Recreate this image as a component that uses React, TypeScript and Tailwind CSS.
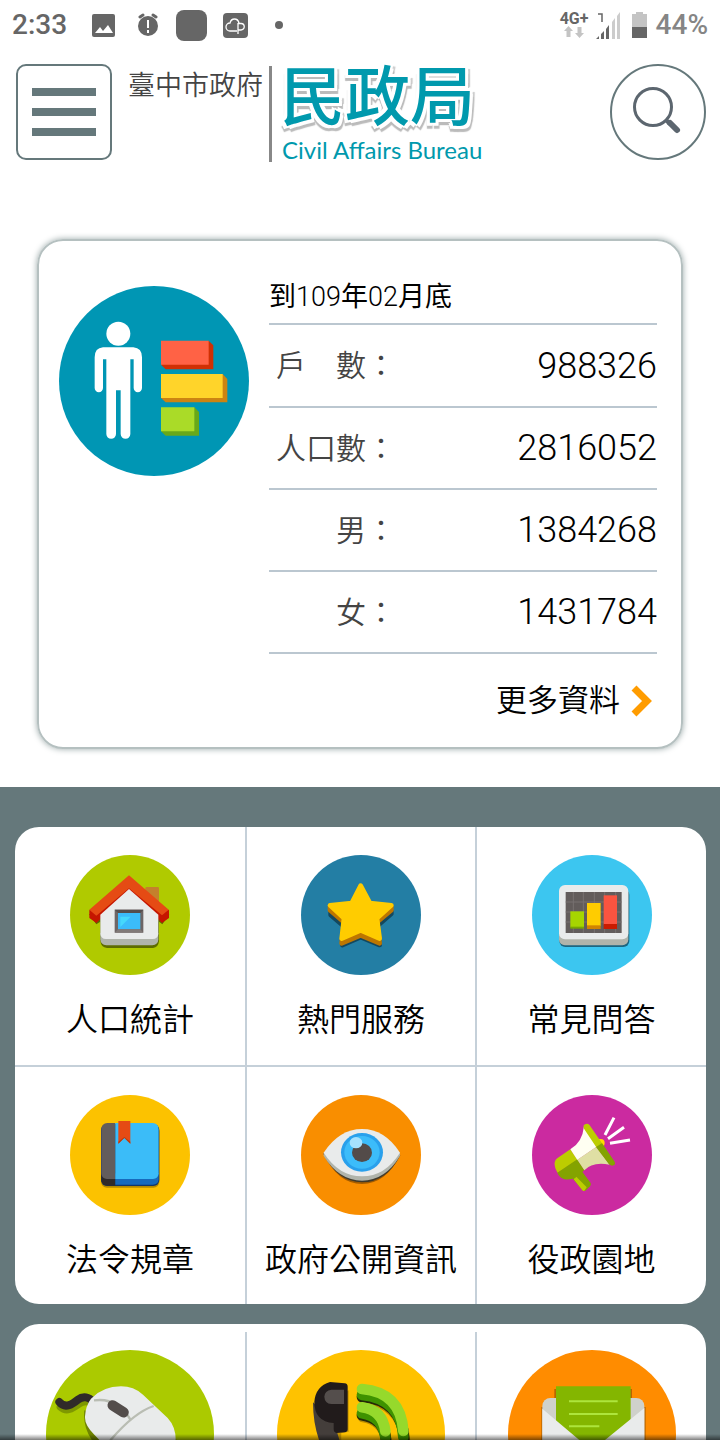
import React from 'react';
import clsx from 'clsx';

interface Service {
  label: string;
  icon: React.ReactNode;
}

const stats = [
  { label: '戶　數：', value: '988326' },
  { label: '人口數：', value: '2816052' },
  { label: '男：', value: '1384268' },
  { label: '女：', value: '1431784' },
];

const PopulationIcon = () => (
  <svg viewBox="0 0 570 570" className="w-[190px] h-[190px] shrink-0" aria-hidden="true">
    <circle cx="285" cy="285" r="285" fill="#0096b4" />
    <g fill="#fff">
      <circle cx="178" cy="143" r="36" />
      <path d="M132 184h91q26 2 26 30v92a12 12 0 0 1-25 0v-86h-10v224a14 14 0 0 1-29 0V313h-14v131a14 14 0 0 1-29 0V220h-10v86a12 12 0 0 1-25 0v-92q0-28 25-30z" />
    </g>
    <path fill="#d03004" d="M306 236l14 14h143v-72l-14-14z" />
    <path fill="#ff6245" d="M306 164h143v72H306z" />
    <path fill="#cc8412" d="M306 336l14 13h185v-70l-14-15z" />
    <path fill="#ffd42a" d="M306 264h185v72H306z" />
    <path fill="#68a81a" d="M306 436l14 13h100v-71l-14-14z" />
    <path fill="#aadb28" d="M306 364h100v72H306z" />
  </svg>
);

const HouseIcon = () => (
  <svg viewBox="208 105 360 360" className="w-[120px] h-[120px]" aria-hidden="true">
    <circle cx="388" cy="285" r="180" fill="#b0ca00" />
    <path fill="#c4802c" d="M434 205q0-4 4-4h33q4 0 4 4v50h-41z" />
    <path fill="#5e6c00" d="M265 282l22 31 12-8v58q2 19 20 21h138q16-2 18-20v-59l10 8 21-30z" />
    <path fill="#b0b4ab" d="M299 340h174v18q-1 17-18 18H317q-17-1-18-18z" />
    <path fill="#c51500" d="M266 271v23l21 15 98-98 99 98 21-15v-23l-120-85z" />
    <path fill="#e9ebeb" d="M299 284l86-77 88 77v57q-1 15-17 16H316q-16-1-17-16z" />
    <path fill="#e54b14" d="M266 269L385 166l119 103-20 17-99-81-98 82z" />
    <path fill="#6d6565" d="M342 269h86v69h-86z" />
    <path fill="#554e4e" d="M342 269h86l-9 10h-67z" />
    <path fill="#3bbcfa" d="M352 279h67v49h-67z" />
    <path fill="#45d8fc" d="M359 290h31l-31 31z" />
    <path fill="#817a78" d="M342 338l10-10h67l9 10z" />
  </svg>
);

const StarIcon = () => (
  <svg viewBox="183 105 360 360" className="w-[120px] h-[120px]" aria-hidden="true">
    <circle cx="363" cy="285" r="180" fill="#237ea4" />
    <g strokeLinejoin="round" strokeWidth="14">
      <path fill="#14485e" stroke="#14485e" d="M362 218l28 52 64 5v6l-43 38 8 56-57-24-55 24 7-54-42-36v-10l65-5z" />
      <path fill="#bd7600" stroke="#bd7600" d="M362 208l28 52 64-1v12l-43 36 8 63-57-24-57 24 7-63-42-36v-12l65 1z" />
      <path fill="#ffcc00" stroke="#ffcc00" d="M362 197l28 52 64 7-43 39 8 61-57-25-57 25 7-61-42-39 65-7z" />
    </g>
  </svg>
);

const ChartIcon = () => (
  <svg viewBox="184 105 360 360" className="w-[120px] h-[120px]" aria-hidden="true">
    <circle cx="364" cy="285" r="180" fill="#3cc6f0" />
    <rect x="266" y="206" width="210" height="175" rx="18" fill="#1d6680" />
    <rect x="265" y="200" width="208" height="176" rx="18" fill="#b0b4ab" />
    <rect x="265" y="195" width="208" height="163" rx="18" fill="#e9ebeb" />
    <path fill="#625c5b" d="M285 216h168v123H285z" />
    <path stroke="#777170" strokeWidth="3" d="M308 216v123M338 216v123M371 216v123M402 216v123M435 216v123M285 246h168M285 276h168M285 306h168" />
    <path fill="#a6d600" d="M299 274h41v48h-41z" />
    <path fill="#78a800" d="M299 320h41v6h-41z" />
    <path fill="#ffcc00" d="M349 249h41v69h-41z" />
    <path fill="#d18300" d="M349 316h41v11h-41z" />
    <path fill="#fa5440" d="M399 226h40v88h-40z" />
    <path fill="#c91b00" d="M399 312h40v15h-40z" />
  </svg>
);

const BookIcon = () => (
  <svg viewBox="208 105 360 360" className="w-[120px] h-[120px]" aria-hidden="true">
    <circle cx="388" cy="285" r="180" fill="#fcc200" />
    <rect x="301" y="197" width="175" height="186" rx="18" fill="#b58b00" />
    <rect x="301" y="192" width="175" height="186" rx="18" fill="#11376a" />
    <path fill="#302b29" d="M302 340h42v37h-24q-17-1-18-18z" />
    <path fill="#176abc" d="M344 340h130v18q-1 16-18 16H344z" />
    <path fill="#635d5c" d="M320 189h24v168h-25q-15-1-17-15V207q1-17 18-18z" />
    <path fill="#3bbcf8" d="M344 189h112q17 1 18 18v134q-2 14-17 16H344z" />
    <path fill="#e54b14" d="M353 183h36v68l-18-18-18 18z" />
    <path fill="#b93b10" d="M353 245l18-14 18 14v6l-18-17-18 17z" />
  </svg>
);

const EyeIcon = () => (
  <svg viewBox="183 105 360 360" className="w-[120px] h-[120px]" aria-hidden="true">
    <circle cx="363" cy="285" r="180" fill="#f98e00" />
    <path fill="#a35c00" d="M250 282q45 90 116 90t115-86z" />
    <path fill="#3f3a2c" d="M250 280q42 87 116 87t115-82z" />
    <path fill="#b0b4ab" d="M251 278v10q46 74 115 74t114-74v-10z" />
    <path fill="#e9ebeb" d="M251 278q47-71 115-71t114 71q-45 71-114 71t-115-71z" />
    <ellipse cx="366" cy="277" rx="63" ry="58" fill="#29a0ec" />
    <ellipse cx="366" cy="277" rx="53" ry="49" fill="#3cbcfa" />
    <ellipse cx="366" cy="278" rx="30" ry="28" fill="#534b49" />
    <ellipse cx="348" cy="248" rx="19" ry="17" fill="#a6e2ff" />
  </svg>
);

const MegaphoneIcon = () => (
  <svg viewBox="184 105 360 360" className="w-[120px] h-[120px]" aria-hidden="true">
    <circle cx="364" cy="285" r="180" fill="#cb2aa0" />
    <circle cx="390" cy="249" r="12" fill="#ffdc00" />
    <path fill="#84a300" d="M305 355l28-22 27 36q2 5-2 10l-12 12q-5 4-10 0z" />
    <path fill="#bccd00" d="M309 358l8-8 31 32-7 10q-3 2-6-1z" />
    <path fill="#bccd00" d="M299 268l22 31-60 40q-20-34 3-47z" />
    <path fill="#84a300" d="M320 298l21 32q-32 36-62 27-14-6-19-19z" />
    <path fill="#fffff2" d="M299 268q36-20 41-69l38 61-58 40z" />
    <path fill="#dfdfa4" d="M377 260l40 54q-52-10-76 17l-21-32z" />
    <path fill="#bccd00" d="M340 206q-4-10 3-13 8-4 14 3l37 54-17 12z" />
    <path fill="#84a300" d="M376 261l18-12 38 56q3 8-3 11-7 3-14-3z" />
    <path stroke="#fff" strokeWidth="9" d="M403 225l27-52M412 236l48-34M418 250l60-10" />
  </svg>
);

const MouseIcon = () => (
  <svg viewBox="137 119 504 504" className="w-[168px] h-[168px]" aria-hidden="true">
    <circle cx="389" cy="371" r="252" fill="#abca00" />
    <path fill="none" stroke="#7f9800" strokeWidth="22" strokeLinecap="round" d="M180 290c20 18 40 2 56-9s32-8 42 4" />
    <path fill="none" stroke="#302a29" strokeWidth="24" strokeLinecap="round" d="M177 275c18 22 40 6 56-7s34-7 43 4" />
    <path fill="#708400" d="M252 300q-6 60 36 106l80 80h140l20-100z" />
    <path fill="#e9ebeb" d="M272 265q36-37 90-37 38 0 66 25l74 70q26 28 24 72-4 90-94 90-40 0-66-24l-84-88q-30-30-28-55 2-32 18-53z" />
    <path fill="none" stroke="#b9bdb3" strokeWidth="7" d="M281 270q44-5 62 14M380 312l9 14M330 390q72-84 130-103" />
    <path stroke="#534d4b" strokeWidth="31" strokeLinecap="round" d="M337 285l33 21" />
  </svg>
);

const PhoneIcon = () => (
  <svg viewBox="831 119 504 504" className="w-[168px] h-[168px]" aria-hidden="true">
    <circle cx="1083" cy="371" r="252" fill="#ffc200" />
    <path fill="#c69400" d="M944 300q2 120 86 190h30q-40-60-36-122l22-4V240z" />
    <path fill="#443e3b" d="M939 276q0 120 70 206l60-24q-56-46-62-120z" />
    <path fill="#211b1b" d="M990 215l44 4q9 1 9 10v128q0 8-9 9l-24 2q-9-2-9-12v-18q-58-4-58-64 4-46 47-59z" />
    <path fill="#544e4c" d="M1032 238v43h-38q-20-2-21-22 1-18 21-21z" />
    <g fill="none" strokeWidth="32" strokeLinecap="round">
      <path stroke="#bb8d00" d="M1089 264q118 14 126 128M1089 320q63 10 70 72" />
      <path stroke="#242a08" d="M1086 260q120 10 127 128M1086 315q66 10 72 72" />
      <path stroke="#3e9200" d="M1086 254q118 12 124 126M1086 309q62 10 70 72" />
      <path stroke="#96d92c" d="M1086 236q116 10 124 126M1086 291q62 8 70 72" />
    </g>
  </svg>
);

const MailIcon = () => (
  <svg viewBox="142 119 504 504" className="w-[168px] h-[168px]" aria-hidden="true">
    <circle cx="394" cy="371" r="252" fill="#ff8c00" />
    <path fill="#b76500" d="M281 236h233v50h-233zM242 290h313v210H242z" />
    <rect x="245" y="263" width="306" height="230" rx="24" fill="#cfd1cb" />
    <path fill="#84b600" d="M286 228h224v200H286z" />
    <path stroke="#ade53c" strokeWidth="6" d="M325 273h146M325 311h146M325 348h91" />
    <path fill="#e9ebeb" d="M245 295l110 93 39 24 40-24 117-95v180q-2 20-22 20H267q-20-2-22-20z" />
  </svg>
);

const services: Service[] = [
  { label: '人口統計', icon: <HouseIcon /> },
  { label: '熱門服務', icon: <StarIcon /> },
  { label: '常見問答', icon: <ChartIcon /> },
  { label: '法令規章', icon: <BookIcon /> },
  { label: '政府公開資訊', icon: <EyeIcon /> },
  { label: '役政園地', icon: <MegaphoneIcon /> },
];

const contacts: Service[] = [
  { label: '線上申辦', icon: <MouseIcon /> },
  { label: '聯絡電話', icon: <PhoneIcon /> },
  { label: '民政信箱', icon: <MailIcon /> },
];

const StatusBar: React.FC = () => (
  <div className="h-12 px-3 pt-[2px] flex items-center justify-between text-[28px] font-medium text-[#666]">
    <div className="flex items-center">
      <span className="w-20">2:33</span>
      <svg viewBox="0 0 23 23" className="w-[23px] h-[23px]" aria-hidden="true">
        <rect width="23" height="23" rx="2" fill="#666" />
        <path fill="#fff" d="M3 19l5-6 3 4 5-6 5 8z" />
      </svg>
      <svg viewBox="0 0 22 24" className="w-[22px] h-6 ml-[22px]" aria-hidden="true">
        <circle cx="11" cy="13" r="10" fill="#666" />
        <path stroke="#666" strokeWidth="3" strokeLinecap="round" d="M3 4l3-2M19 4l-3-2" />
        <path stroke="#fff" strokeWidth="2" d="M11 7v8M11 17v3" />
      </svg>
      <span className="w-[31px] h-[31px] ml-[17px] rounded-lg bg-[#666]" />
      <svg viewBox="0 0 25 25" className="w-[25px] h-[25px] ml-4" aria-hidden="true">
        <rect width="25" height="25" rx="4" fill="#666" />
        <path fill="none" stroke="#fff" strokeWidth="1.3" d="M14 18H7a3.500 3.500 0 0 1 0-8q1-4 4.500-4t4.500 4v1M15 21V10M15 10.500h3a3 3 0 0 1 0 6.500h-3" />
      </svg>
      <span className="w-2 h-2 ml-[27px] rounded-full bg-[#666]" />
    </div>
    <div className="flex items-center text-[#858585]">
      <div className="flex flex-col items-center w-[31px] text-base leading-[14px] font-bold text-[#666]">
        4G+
        <svg viewBox="0 0 20 12" className="w-5 h-3" aria-hidden="true">
          <path fill="#c4c4c4" d="M4.500 0L9 5H6.500v6h-4V5H0zM15.500 12L11 7h2.500V1h4v6H20z" />
        </svg>
      </div>
      <svg viewBox="0 0 25 27" className="w-[25px] h-[27px] ml-[6px]" aria-hidden="true">
        <path fill="none" stroke="#666" strokeWidth="1.500" d="M2 2h4v8" />
        <path fill="#666" d="M0 27l3-3v3zM5 22l3-3v8H5zM10 17l3-4v14h-3z" />
        <path fill="#ccc" d="M16 10l3-4v21h-3zM21 4l3-4v27h-3z" />
      </svg>
      <svg viewBox="0 0 15 26" className="w-[15px] h-[26px] ml-[11px]" aria-hidden="true">
        <path fill="#c4c4c4" d="M4 0h7v2h4v14H0V2h4z" />
        <path fill="#666" d="M0 15h15v11H0z" />
      </svg>
      <span className="ml-[9px]">44%</span>
    </div>
  </div>
);

const Header: React.FC = () => (
  <header className="pt-4 pl-4 pr-[14px] flex items-start">
    <button
      aria-label="選單"
      className="w-24 h-24 shrink-0 flex flex-col items-center justify-center gap-3 rounded-[10px] border-2 border-[#65787b]"
    >
      <span className="w-16 h-2 bg-[#65787b]" />
      <span className="w-16 h-2 bg-[#65787b]" />
      <span className="w-16 h-2 bg-[#65787b]" />
    </button>
    <a href="#home" className="ml-4 flex items-start whitespace-nowrap">
      <span className="pt-1 text-[27px] leading-9 text-[#444]">臺中市政府</span>
      <span className="mt-[2px] ml-[6px] pl-2 border-l-[3px] border-[#888] h-24 flex flex-col justify-between text-[#0099ad]">
        <span className="text-[65px] leading-[64px] font-medium font-['Roboto','Noto_Sans_CJK_TC',sans-serif] [text-shadow:2px_0_#fff,-2px_0_#fff,0_2px_#fff,0_-2px_#fff,3px_3px_#fff,-3px_3px_#fff,3px_-3px_#fff,-3px_-3px_#fff,4px_6px_1px_#bbb,-3px_6px_1px_#bbb,5px_1px_1px_#ccc]">
          民政局
        </span>
        <span className="pl-[2px] text-[24px] leading-6 font-['Lato',sans-serif]">Civil Affairs Bureau</span>
      </span>
    </a>
    <button
      aria-label="搜尋"
      className="w-24 h-24 shrink-0 ml-auto flex items-center justify-center rounded-full border-2 border-[#65787b]"
    >
      <svg viewBox="0 0 50 50" className="w-[50px] h-[50px]" fill="none" stroke="#5c666f" aria-hidden="true">
        <circle cx="20" cy="20" r="18.500" strokeWidth="3" />
        <path d="M33 33l4 4" strokeWidth="4" />
        <path d="M37 36l7 7" strokeWidth="6" strokeLinecap="round" />
      </svg>
    </button>
  </header>
);

const Population: React.FC = () => (
  <section className="mt-[77px] mb-[38px] mx-[37px] pt-7 pb-[18px] pl-5 pr-6 flex gap-5 rounded-[26px] border-2 border-[#b5c0c0] shadow-[0_0_6px_#9aa8a8]">
    <div className="pt-[17px]">
      <PopulationIcon />
    </div>
    <div className="flex-grow">
      <table className="w-full">
        <caption className="h-14 border-b-2 border-[#bbc7d0] text-left text-[27px] leading-[56px] font-['Roboto_Light','Noto_Sans_CJK_TC',sans-serif] text-black">
          到109年02月底
        </caption>
        <tbody>
          {stats.map((row) => (
            <tr key={row.label} className="h-[82px] border-b-2 border-[#bbc7d0]">
              <th
                scope="row"
                className="w-[127px] p-0 pb-1 text-right text-[30px] font-normal text-[#444] whitespace-nowrap font-['Noto_Sans_CJK_TC_DemiLight','Noto_Sans_CJK_TC',sans-serif]"
              >
                {row.label}
              </th>
              <td className="p-0 text-right text-[36px] font-['Roboto_Light','Roboto',sans-serif] text-black">{row.value}</td>
            </tr>
          ))}
        </tbody>
      </table>
      <a href="#more" className="mt-[19px] h-14 flex items-center justify-end gap-[10px] pr-[5px] text-[31px] text-black">
        更多資料
        <svg viewBox="0 0 22 32" className="w-[22px] h-8" aria-hidden="true">
          <path fill="none" stroke="#ff9c00" strokeWidth="7" d="M4 3l13 13L4 29" />
        </svg>
      </a>
    </div>
  </section>
);

const App: React.FC = () => (
  <div className="relative h-screen overflow-hidden bg-white font-['Roboto','Noto_Sans_CJK_TC_DemiLight','Noto_Sans_CJK_TC',sans-serif]">
    <StatusBar />
    <Header />
    <main>
      <Population />
      <div className="bg-[#65787b] pt-10 pb-10 pl-[15px] pr-[14px] flex flex-col gap-5">
        <nav className="grid grid-cols-[232fr_230fr_229fr] rounded-3xl bg-white">
          {services.map((item, i) => (
            <a
              key={item.label}
              href="#service"
              className={clsx(
                'flex flex-col items-center pt-7 border-[#c5d0d9]',
                i % 3 < 2 && 'border-r-2',
                i < 3 ? 'h-60 border-b-2' : 'h-[237px]'
              )}
            >
              {item.icon}
              <span className="mt-[21px] text-[32px] leading-[48px] text-black whitespace-nowrap">{item.label}</span>
            </a>
          ))}
        </nav>
        <nav className="grid grid-cols-[232fr_230fr_229fr] py-2 rounded-3xl bg-white">
          {contacts.map((item, i) => (
            <a
              key={item.label}
              href="#contact"
              aria-label={item.label}
              className={clsx('flex flex-col items-center pt-[18px] pb-10 border-[#c5d0d9]', i < 2 && 'border-r-2')}
            >
              {item.icon}
            </a>
          ))}
        </nav>
      </div>
    </main>
    <div className="absolute inset-x-0 bottom-0 h-[6px] bg-gradient-to-b from-transparent to-black/50" />
  </div>
);

export default App;
